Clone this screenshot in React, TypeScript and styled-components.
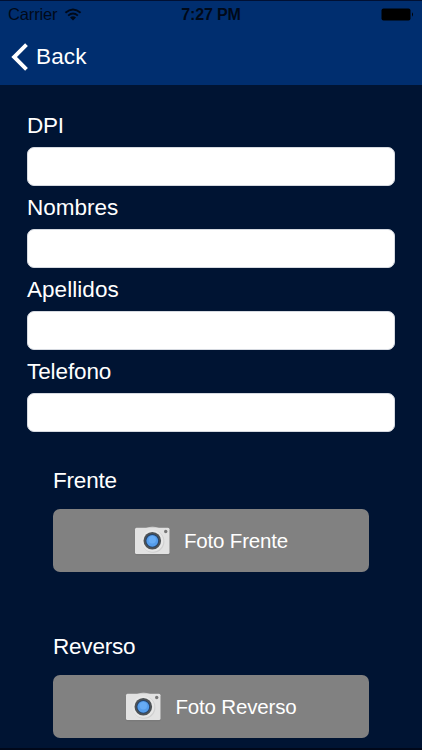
import React from 'react';
import styled, { createGlobalStyle } from 'styled-components';

const GlobalStyle = createGlobalStyle`
  * { box-sizing: border-box; }
  body { margin: 0; background: #001433; }
`;

const Screen = styled.main`
  display: flex;
  flex-direction: column;
  width: 422px;
  height: 750px;
  overflow: hidden;
  background: #001433;
  border-top: 1px solid #001033;
  border-bottom: 2px solid #00081a;
  color: #fff;
  font-family: "Liberation Sans", Arial, sans-serif;
`;

const Header = styled.header`
  flex: none;
  height: 84px;
  background: #002e6f;
`;

const StatusBar = styled.div`
  display: grid;
  grid-template-columns: 1fr auto 1fr;
  align-items: center;
  height: 27px;
  padding: 0 8px 0 8px;
  color: #000918;
  font-size: 16.5px;
  line-height: 27px;
`;

const Carrier = styled.div`
  display: flex;
  align-items: center;
  gap: 7px;
  letter-spacing: -0.15px;
`;

const Clock = styled.time`
  font-size: 16px;
  font-weight: 700;
  letter-spacing: -0.12px;
`;

const BatterySlot = styled.div`
  display: flex;
  justify-content: flex-end;
`;

const BackButton = styled.button`
  display: flex;
  align-items: center;
  gap: 7px;
  height: 57px;
  padding: 0 0 0 11px;
  border: 0;
  background: none;
  color: #fff;
  font: 22.5px/57px "Liberation Sans", Arial, sans-serif;
  letter-spacing: 0.15px;
`;

const Form = styled.form`
  display: flex;
  flex-direction: column;
  padding: 20px 27px 0;
`;

const Field = styled.label`
  display: flex;
  flex-direction: column;
  height: 82px;
`;

const LabelText = styled.span<{ $spacing?: number }>`
  height: 42px;
  font-size: 22.5px;
  line-height: 42px;
  letter-spacing: ${({ $spacing = 0 }) => $spacing}px;
`;

const TextInput = styled.input`
  width: 368px;
  height: 39px;
  padding: 0 10px;
  border: 1px solid #d5d9e0;
  border-radius: 7px;
  background: #fff;
  font: inherit;
`;

const PhotoSection = styled.section`
  display: flex;
  flex-direction: column;
  height: 166px;
  padding: 0 26px;
`;

const PhotoList = styled.div`
  padding-top: 27px;
`;

const PhotoLabel = styled(LabelText)`
  height: 49px;
`;

const PhotoButton = styled.button`
  display: flex;
  justify-content: center;
  align-items: center;
  gap: 13px;
  width: 316px;
  height: 63px;
  padding: 0;
  border: 0;
  border-radius: 7px;
  background: #818181;
  color: #fff;
  font: 20.5px/63px "Liberation Sans", Arial, sans-serif;
  letter-spacing: -0.17px;
`;

const WifiIcon = () => (
  <svg width="18" height="13" viewBox="0 0 18 13" fill="none" stroke="currentColor" strokeWidth="1.9">
    <path d="M1.4 4.8Q9-2 16.6 4.8M4.1 7.6Q9 3.4 13.9 7.6" />
    <path d="M6 9.4Q9 7.3 12 9.4L9 12.5Z" fill="currentColor" stroke="none" />
  </svg>
);

const BatteryIcon = () => (
  <svg width="33" height="13" viewBox="0 0 33 13" fill="#000">
    <rect x="0.5" y="0.5" width="29" height="12" rx="2" />
    <path d="M31 4.3Q33 6.5 31 8.7Z" />
  </svg>
);

const BackIcon = () => (
  <svg width="18" height="28" viewBox="0 0 18 28" fill="none" stroke="#fff" strokeWidth="3.9">
    <path d="M15.5 1.6 3.1 14 15.5 26.4" />
  </svg>
);

const CameraIcon = () => (
  <svg width="37" height="30" viewBox="0 0 37 30">
    <rect x="0.8" y="1.7" width="35.2" height="27.5" rx="1.8" fill="#707070" opacity="0.45" />
    <rect x="1" y="1.7" width="34.5" height="26.3" rx="1.5" fill="#e2e2e2" />
    <path d="M12 1.7Q18.5 0 25 1.7Z" fill="#e2e2e2" />
    <circle cx="19.2" cy="15.5" r="11.2" fill="#d0d0d0" />
    <circle cx="18.4" cy="14.9" r="10.9" fill="#e7e7e7" />
    <circle cx="18.3" cy="14.8" r="8.8" fill="#4d5256" />
    <circle cx="18.3" cy="14.8" r="6.8" fill="#24436b" />
    <circle cx="18.3" cy="14.8" r="5.9" fill="#559deb" />
    <circle cx="18.3" cy="13.8" r="3.7" fill="#67acf5" />
    <circle cx="31.7" cy="5.5" r="1.7" fill="#777" />
  </svg>
);

const fields = [
  { name: 'DPI', spacing: -0.3 },
  { name: 'Nombres', spacing: 0 },
  { name: 'Apellidos', spacing: 0.05 },
  { name: 'Telefono', spacing: -0.1 },
];
const photos = ['Frente', 'Reverso'];

export default function App() {
  return (
    <>
      <GlobalStyle />
      <Screen>
        <Header>
          <StatusBar>
            <Carrier>Carrier<WifiIcon /></Carrier>
            <Clock>7:27 PM</Clock>
            <BatterySlot><BatteryIcon /></BatterySlot>
          </StatusBar>
          <BackButton type="button"><BackIcon />Back</BackButton>
        </Header>
        <Form>
          {fields.map(({ name, spacing }) => (
            <Field key={name}>
              <LabelText $spacing={spacing}>{name}</LabelText>
              <TextInput type="text" />
            </Field>
          ))}
          <PhotoList>
            {photos.map((side) => (
              <PhotoSection key={side}>
                <PhotoLabel $spacing={-0.2}>{side}</PhotoLabel>
                <PhotoButton type="button"><CameraIcon />Foto {side}</PhotoButton>
              </PhotoSection>
            ))}
          </PhotoList>
        </Form>
      </Screen>
    </>
  );
}
